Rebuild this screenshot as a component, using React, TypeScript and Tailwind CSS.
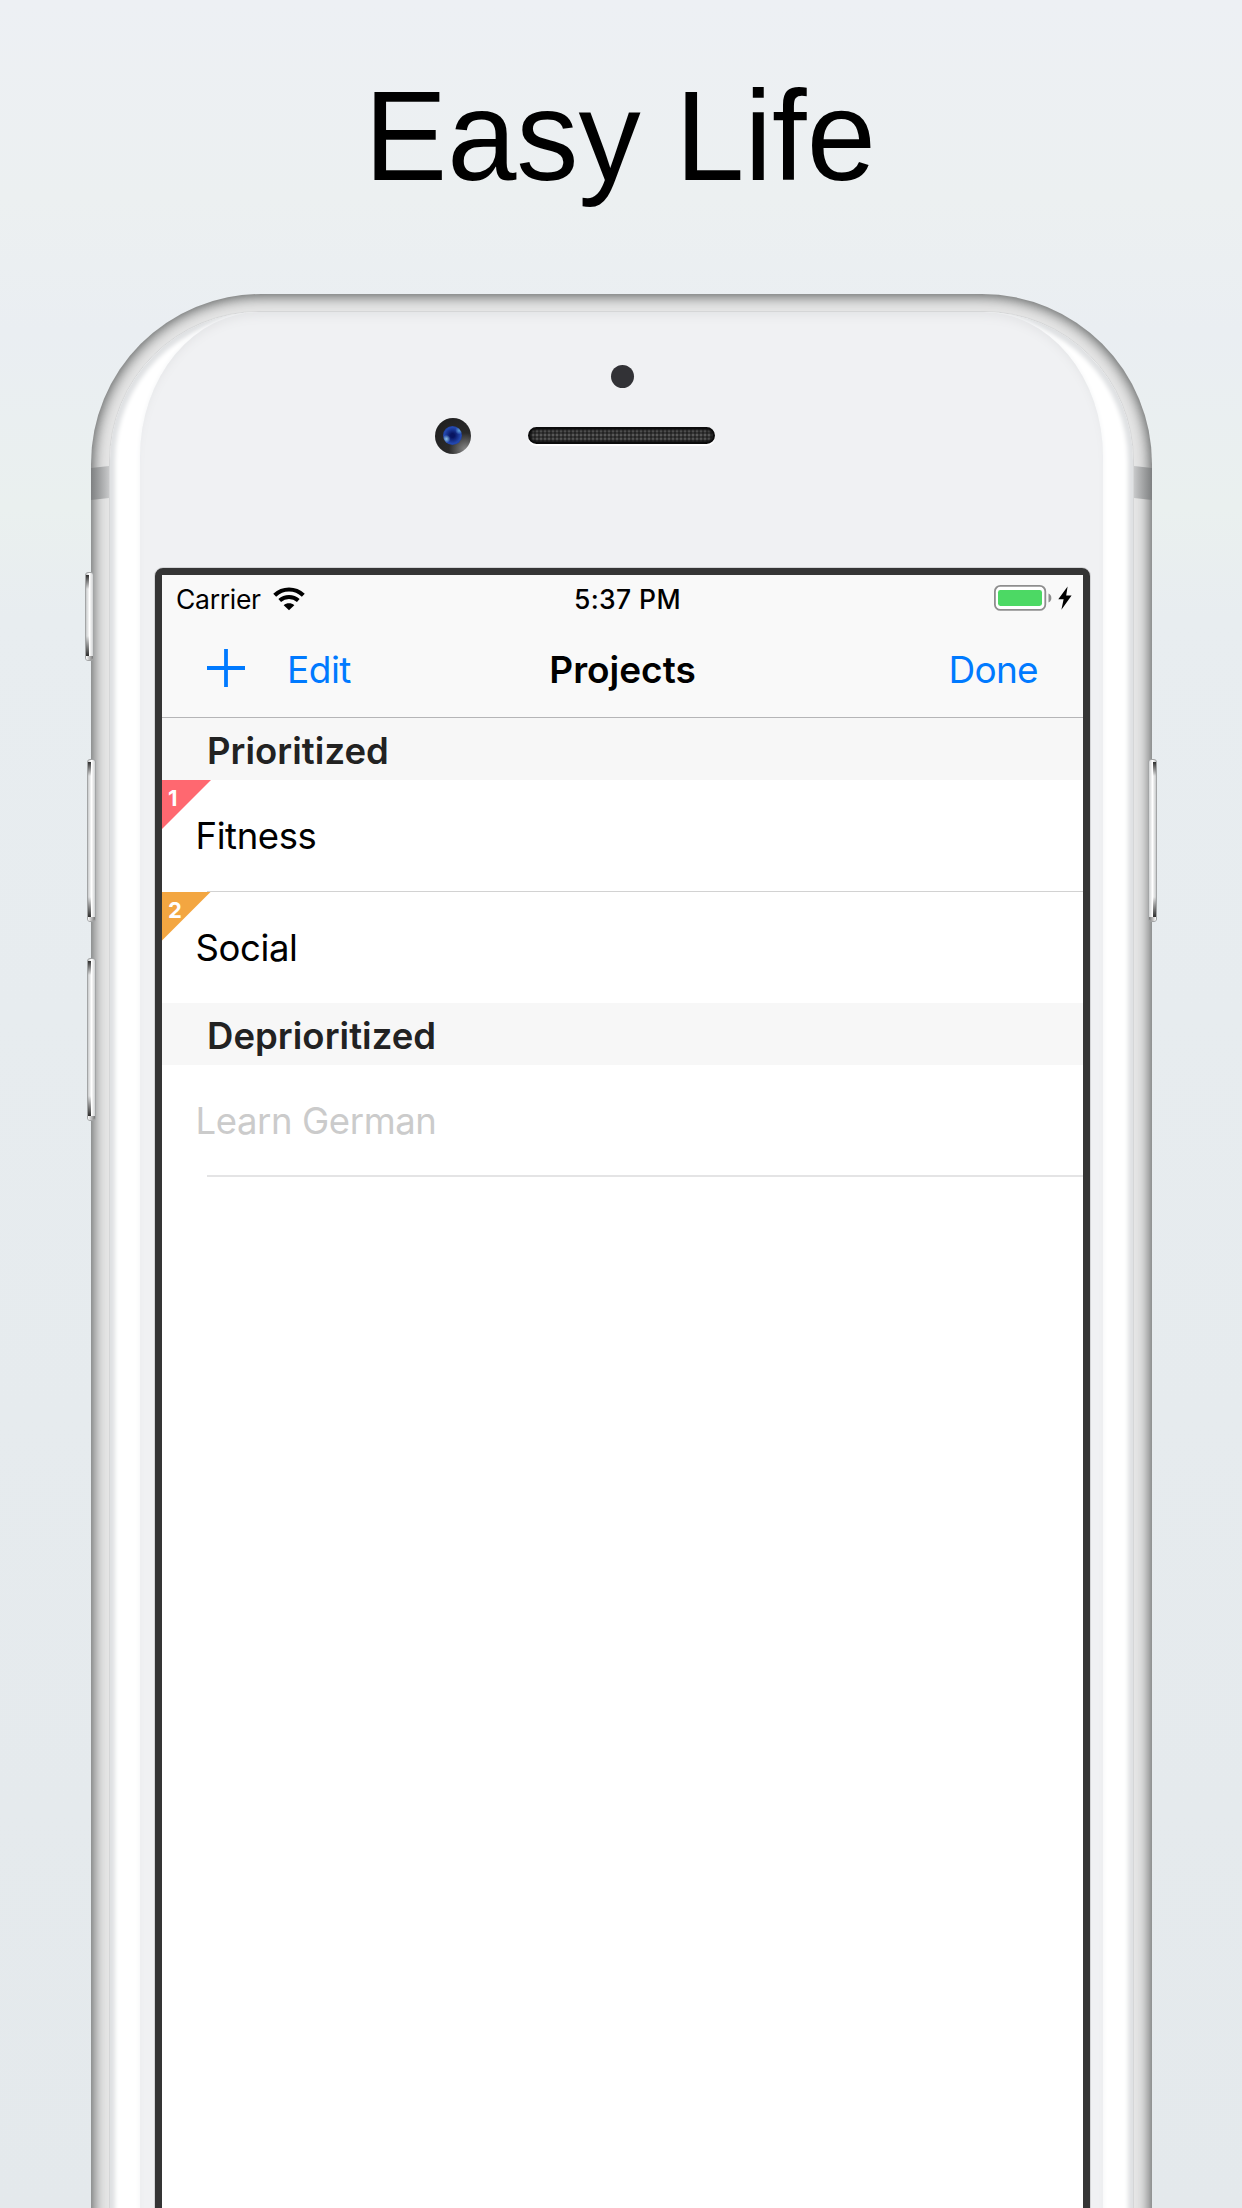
import React from "react";

function SideButton({ className }: { className: string }) {
  return (
    <div
      className={
        "absolute z-10 w-[9px] overflow-hidden rounded-[3px] border border-[#a3a5a6] bg-linear-to-r from-[#c9cbcc] via-white to-[#d0d2d3] " +
        className
      }
    >
      <div className="absolute top-[2px] left-0 h-[14px] w-[3px] bg-linear-to-b from-[#2e2e2e] to-transparent" />
      <div className="absolute bottom-[4px] left-0 h-[20px] w-[3px] bg-linear-to-t from-[#2e2e2e] to-transparent" />
      <div className="absolute bottom-0 h-[4px] w-full bg-linear-to-r from-white to-[#777]" />
    </div>
  );
}

function WifiIcon() {
  return (
    <svg width="32" height="24" viewBox="0 0 32 24" fill="none">
      <path d="M1.7 8.2C9.8 0.6 22.2 0.6 30.3 8.2" stroke="#000" strokeWidth="4.2" />
      <path d="M6.7 13.6C12 8.9 20 8.9 25.3 13.6" stroke="#000" strokeWidth="4" />
      <path d="M16 23.2L10.7 18.3C13.6 15.7 18.4 15.7 21.3 18.3Z" fill="#000" />
    </svg>
  );
}

function BatteryIcon() {
  return (
    <svg className="-mt-[2px]" width="79" height="26" viewBox="0 0 79 26">
      <rect x="0.9" y="0.9" width="50.4" height="24" rx="5.5" fill="#fff" stroke="#8e8e8e" strokeWidth="1.8" />
      <rect x="4" y="5" width="44" height="16" rx="2.4" fill="#4cd964" />
      <path d="M54.5 8.5C58.3 10 58.3 16 54.5 17.5Z" fill="#8e8e8e" />
      <path d="M73.6 1.5L64.3 14.3L69.6 14.3L67.4 24.8L77.6 10.6L72.2 10.6Z" fill="#000" />
    </svg>
  );
}

function SectionHeader({ title }: { title: string }) {
  return (
    <div className="h-[62px] bg-[#f7f7f7] pl-[45px] text-[36.5px] leading-[66px] font-semibold tracking-[0.05px] text-[#222]">
      {title}
    </div>
  );
}

function Row({ label, badge, color, last, muted }: { label: string; badge?: string; color?: string; last?: string; muted?: boolean }) {
  return (
    <div className="relative h-[111.5px] pl-[33.5px]">
      {badge && (
        <div
          className={
            "absolute top-0 left-0 h-[49px] w-[49px] pt-[5px] pl-[6px] text-[22px] leading-[26px] font-bold text-white [clip-path:polygon(0_0,100%_0,0_100%)] " +
            color
          }
        >
          {badge}
        </div>
      )}
      <span className={"text-[36.5px] leading-[113px] tracking-[-0.4px] " + (muted ? "text-[#cbcbcb]" : "text-black")}>
        {label}
      </span>
      <div className={last} />
    </div>
  );
}

function Screen() {
  return (
    <div className="flex h-full flex-col bg-white font-['Inter',sans-serif] whitespace-nowrap">
      <header className="h-[143px] border-b border-[#b5b5b7] bg-[#f9f9f9]">
        <div className="flex h-[48px] items-center justify-between pr-[10px] pl-[14px] text-[26.5px]">
          <div className="flex w-[300px] items-center gap-[12px]">
            <span className="pt-px tracking-[-0.3px]">Carrier</span>
            <WifiIcon />
          </div>
          <span className="ml-[6px] pt-[2px] font-medium tracking-[0.4px]">5:37 PM</span>
          <div className="flex w-[300px] justify-end">
            <BatteryIcon />
          </div>
        </div>
        <div className="flex h-[90px] items-center justify-between pr-[45px] pl-[45px] text-[37px] text-[#007aff]">
          <div className="flex w-[300px] items-center gap-[42px]">
            <svg width="38" height="38" viewBox="0 0 38 38">
              <path d="M19 0V38M0 19H38" stroke="#007aff" strokeWidth="3.8" />
            </svg>
            <span className="pt-[4px] tracking-[-0.5px]">Edit</span>
          </div>
          <span className="pt-[4px] font-semibold text-black">Projects</span>
          <span className="w-[300px] pt-[4px] text-right tracking-[-0.7px]">Done</span>
        </div>
      </header>
      <SectionHeader title="Prioritized" />
      <Row label="Fitness" badge="1" color="bg-[#ff6870]" last="absolute right-0 bottom-0 left-[45px] h-px bg-[#d2d2d2]" />
      <Row label="Social" badge="2" color="bg-[#f3a641]" />
      <SectionHeader title="Deprioritized" />
      <Row label="Learn German" muted last="absolute right-0 bottom-0 left-[45px] h-[2px] bg-[#e4e4e5]" />
    </div>
  );
}

export default function App() {
  return (
    <div className="h-[2208px] w-[1242px] overflow-hidden bg-[linear-gradient(180deg,#edf0f4_0%,#ecf0f1_9%,#eaeef2_15%,#eaf0ef_23%,#e8edf0_28%,#e4e9ec_100%)]">
      <h1 className="h-[294px] scale-x-[0.968] pt-[64px] pr-[2px] text-center font-['Liberation_Sans',Arial,sans-serif] text-[128.5px] leading-[144px] text-black">
        Easy Life
      </h1>

      <div className="relative ml-[91px] h-[1960px] w-[1061px]">
        <SideButton className="top-[278px] left-[-6px] h-[89px]" />
        <SideButton className="top-[465px] left-[-4px] h-[163px]" />
        <SideButton className="top-[664px] left-[-4px] h-[163px]" />
        <SideButton className="top-[465px] right-[-5px] h-[163px] -scale-x-100" />

        <div className="relative h-full overflow-hidden rounded-t-[170px] bg-[#e6e6e6] px-[18px] pt-[17px] shadow-[inset_0_0_14px_2px_rgba(60,64,64,0.85)]">
          <div className="absolute top-[173px] left-0 h-[32px] w-[18px] -skew-y-6 bg-linear-to-r from-[#7e8081] to-[#c8c9ca]" />
          <div className="absolute top-[173px] right-0 h-[32px] w-[18px] skew-y-6 bg-linear-to-l from-[#7e8081] to-[#c8c9ca]" />

          <div className="relative h-full overflow-hidden rounded-t-[150px] border border-[#d5d6d7] bg-white px-[30px] shadow-[inset_0_0_4px_5px_#dfe1e3]">
            <div className="flex h-full flex-col items-center rounded-t-[120px_145px] bg-[#f0f1f3] pl-[2px] shadow-[inset_0_8px_10px_-4px_#e3e4e6,0_0_4px_1px_#f6f7f8]">
              <div className="mt-[53px] h-[23px] w-[23px] rounded-full bg-[#323236]" />
              <div className="mt-[29.5px] flex w-full items-center">
                <div className="ml-[292.5px] flex h-[36px] w-[36px] items-center justify-center rounded-full bg-[radial-gradient(circle_at_85%_88%,#8a8a8a_0%,#2a2a2a_38%,#1d1d1d_100%)]">
                  <div className="h-[19px] w-[19px] rounded-full bg-[radial-gradient(circle_at_18%_68%,#8fc4e6_0%,transparent_20%),radial-gradient(circle_at_85%_24%,#5f9fd8_0%,transparent_18%),radial-gradient(circle,#081560_15%,#2348b0_60%,#1f3478_100%)]" />
                </div>
                <div className="ml-[57px] h-[17px] w-[187px] rounded-full border-2 border-[#0c0c0c] bg-[#585858] bg-[repeating-linear-gradient(90deg,rgba(20,20,20,0.5)_0_2px,transparent_2px_4px),repeating-linear-gradient(0deg,rgba(20,20,20,0.5)_0_2px,transparent_2px_4px)] shadow-[inset_0_0_3px_1px_#111,0_2px_1px_#fff]" />
              </div>

              <div className="mt-[114.5px] h-[1660px] w-[935px] shrink-0 rounded-t-[8px] border-[7px] border-[#353535] shadow-[0_0_0_1px_#d4d5d7]">
                <Screen />
              </div>
            </div>
          </div>
        </div>
      </div>
    </div>
  );
}
